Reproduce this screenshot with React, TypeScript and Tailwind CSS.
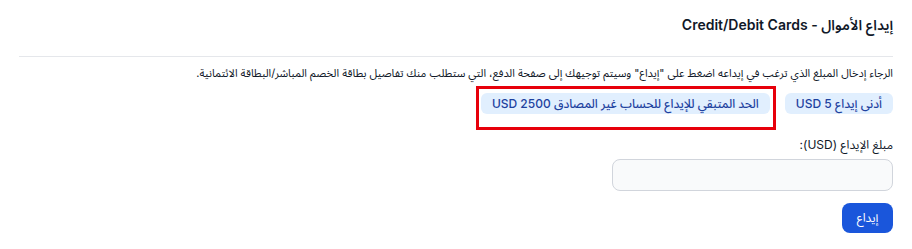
export default function App() {
  return (
    <div
      dir="rtl"
      className="w-[912px] h-[249px] bg-white text-gray-900"
      style={{ fontFamily: 'Inter, "Noto Sans Arabic", "DejaVu Sans", sans-serif' }}
    >
      <div className="mx-[19px] pt-[15px]">
        <h2 className="text-sm font-semibold leading-[20px] pb-[21px] border-b border-gray-200">
          إيداع الأموال - Credit/Debit Cards
        </h2>

        <p className="mt-[8px] text-[11px] leading-[16px] whitespace-nowrap">
          الرجاء إدخال المبلغ الذي ترغب في إيداعه اضغط على "إيداع" وسيتم توجيهك إلى صفحة الدفع، التي ستطلب منك تفاصيل بطاقة الخصم المباشر/البطاقة الائتمانية.
        </p>

        <div className="mt-[5px] flex items-start gap-[9px]">
          <span className="mt-[7px] whitespace-nowrap rounded-md bg-[#e1effe] px-[11px] h-[21px] leading-[21px] text-xs font-medium text-[#1e429f]">
            أدنى إيداع USD 5
          </span>
          <div className="w-[300px] border-[3px] border-red-600 pr-[3px] pl-[2px] pt-[4px] pb-[13px]">
            <span className="block whitespace-nowrap rounded-md bg-[#e1effe] h-[21px] leading-[21px] text-center text-xs font-medium text-[#1e429f]">
              الحد المتبقي للإيداع للحساب غير المصادق USD 2500
            </span>
          </div>
        </div>

        <div className="mt-[7px] w-[281px]">
          <label className="block text-[12px] leading-[16px] mb-[6px]">مبلغ الإيداع (USD):</label>
          <input
            type="text"
            className="block w-full h-[32px] rounded-lg border border-gray-300 bg-gray-50"
          />
          <button className="mt-[12px] h-[30px] w-[51px] rounded-lg bg-[#1a56db] text-white text-[12px]">
            إيداع
          </button>
        </div>
      </div>
    </div>
  );
}
